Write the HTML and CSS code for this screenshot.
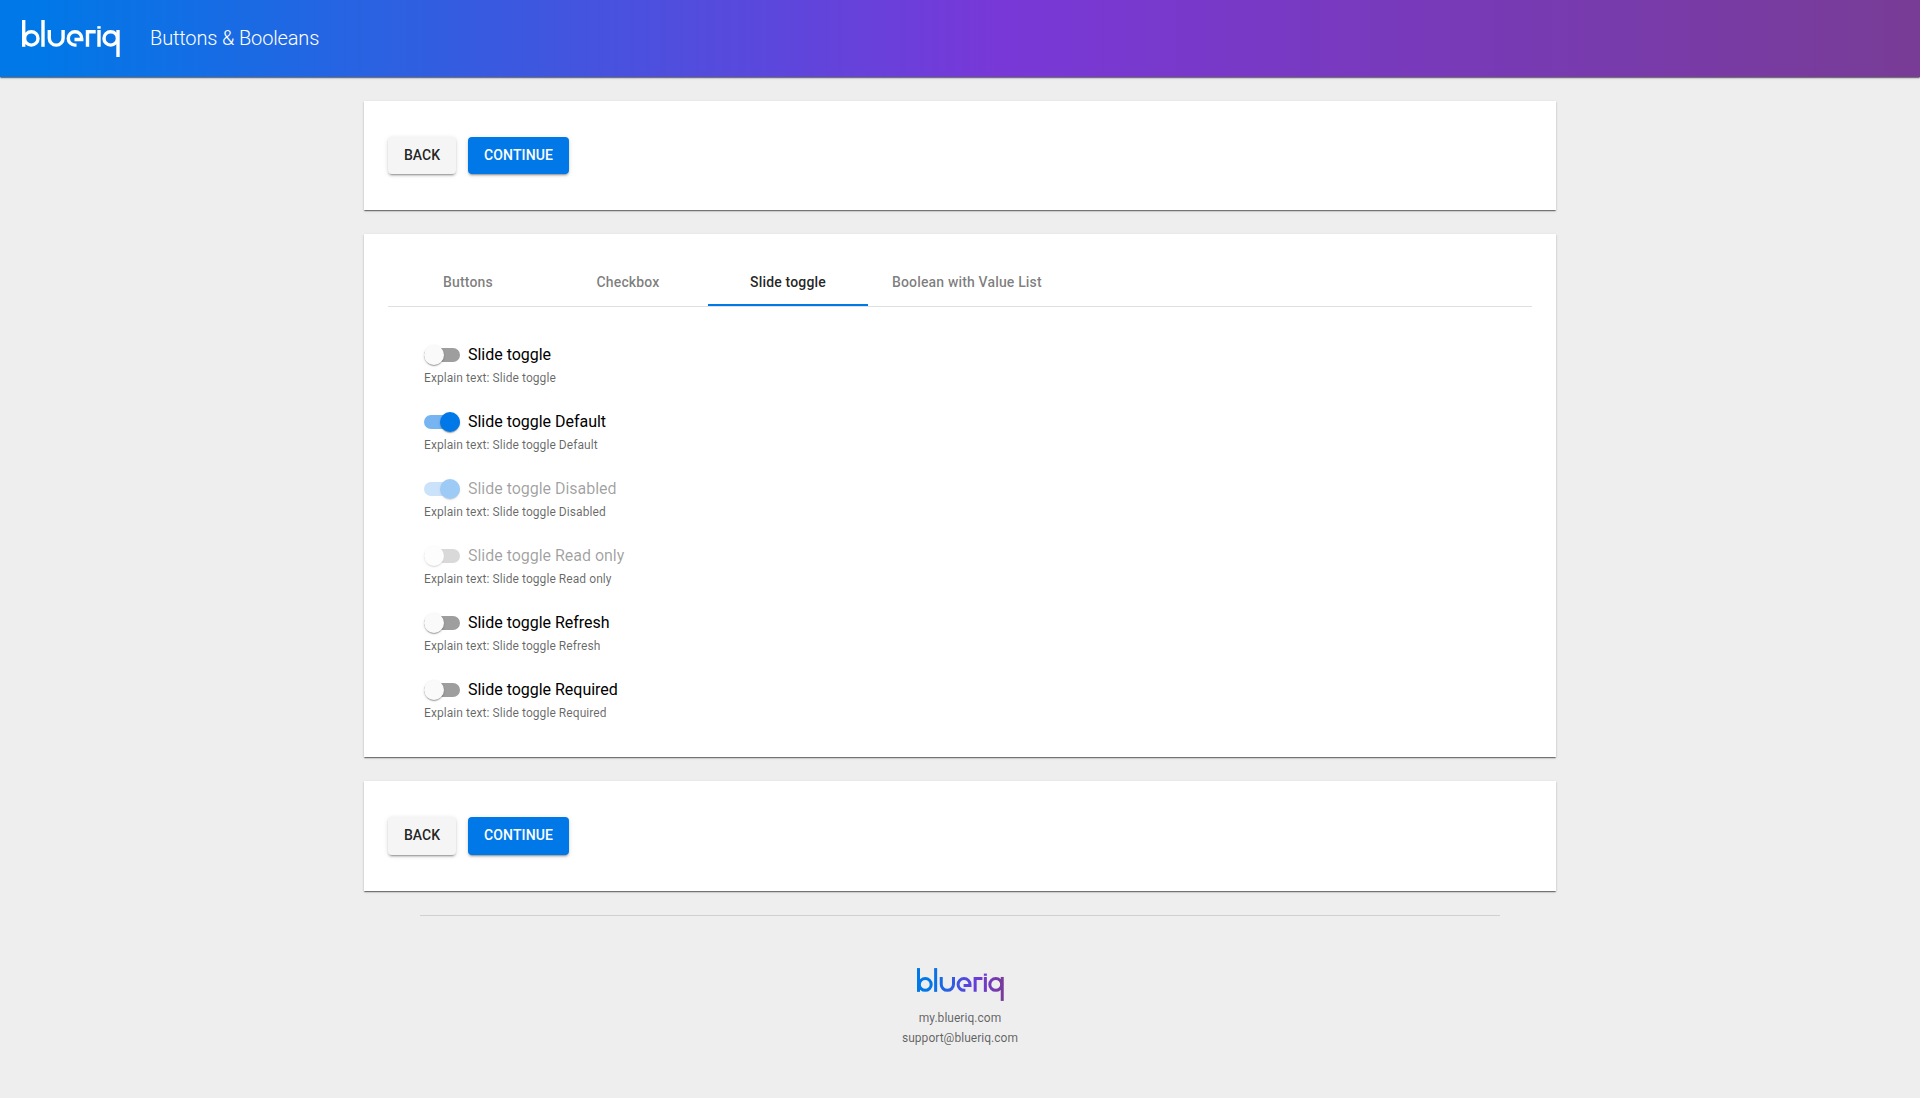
FILE: index.html
```html
<!DOCTYPE html>
<html lang="en">
<head>
<meta charset="utf-8">
<title>Buttons &amp; Booleans</title>
<link rel="stylesheet" href="styles.css">
</head>
<body>
<svg class="defs" width="0" height="0" aria-hidden="true">
  <defs>
    <linearGradient id="brand" gradientUnits="userSpaceOnUse" x1="0" y1="0" x2="98" y2="0">
      <stop offset="0" stop-color="#0078e7"/>
      <stop offset="0.15" stop-color="#0078e7"/>
      <stop offset="0.72" stop-color="#7038d8"/>
      <stop offset="1" stop-color="#783c96"/>
    </linearGradient>
    <symbol id="logo" viewBox="0 0 98 37">
      <g fill="none" stroke-width="3.4">
        <line x1="1.7" y1="0" x2="1.7" y2="26.8"/>
        <circle cx="9.3" cy="18.4" r="6.7"/>
        <line x1="21" y1="0" x2="21" y2="26.8"/>
        <path d="M27.3 10v8.200a6.900 6.900 0 0 0 13.800 0V10"/>
        <path d="M54.500 25.100h-1.500a6.700 6.700 0 1 1 6.700-6.700v1.100h-7.200"/>
        <path d="M65.500 26.800V11.700h8.200"/>
        <line x1="77" y1="10" x2="77" y2="26.800"/>
        <line x1="77" y1="6.200" x2="77" y2="8.700"/>
        <circle cx="88.700" cy="18.400" r="6.700"/>
        <line x1="96" y1="10" x2="96" y2="37"/>
      </g>
    </symbol>
  </defs>
</svg>
<header class="header">
  <svg class="header-logo" role="img" aria-label="blueriq"><use href="#logo"/></svg>
  <h1 class="title">Buttons &amp; Booleans</h1>
</header>
<main class="page">
  <section class="card actions">
    <button class="btn">BACK</button>
    <button class="btn primary">CONTINUE</button>
  </section>
  <section class="card content">
    <nav class="tabs">
      <a class="tab">Buttons</a>
      <a class="tab">Checkbox</a>
      <a class="tab active">Slide toggle</a>
      <a class="tab">Boolean with Value List</a>
    </nav>
    <div class="fields">
      <div class="field">
        <label class="toggle"><span class="track"><span class="thumb"></span></span><span class="text">Slide toggle</span></label>
        <p class="hint">Explain text: Slide toggle</p>
      </div>
      <div class="field">
        <label class="toggle on"><span class="track"><span class="thumb"></span></span><span class="text">Slide toggle Default</span></label>
        <p class="hint">Explain text: Slide toggle Default</p>
      </div>
      <div class="field">
        <label class="toggle on disabled"><span class="track"><span class="thumb"></span></span><span class="text">Slide toggle Disabled</span></label>
        <p class="hint">Explain text: Slide toggle Disabled</p>
      </div>
      <div class="field">
        <label class="toggle disabled"><span class="track"><span class="thumb"></span></span><span class="text">Slide toggle Read only</span></label>
        <p class="hint">Explain text: Slide toggle Read only</p>
      </div>
      <div class="field">
        <label class="toggle"><span class="track"><span class="thumb"></span></span><span class="text">Slide toggle Refresh</span></label>
        <p class="hint">Explain text: Slide toggle Refresh</p>
      </div>
      <div class="field">
        <label class="toggle"><span class="track"><span class="thumb"></span></span><span class="text">Slide toggle Required</span></label>
        <p class="hint">Explain text: Slide toggle Required</p>
      </div>
    </div>
  </section>
  <section class="card actions">
    <button class="btn">BACK</button>
    <button class="btn primary">CONTINUE</button>
  </section>
</main>
<footer class="footer">
  <svg class="footer-logo" role="img" aria-label="blueriq"><use href="#logo"/></svg>
  <a>my.blueriq.com</a>
  <a>support@blueriq.com</a>
</footer>
</body>
</html>
```
FILE: styles.css
```css
* { box-sizing: border-box; }
body {
  margin: 0;
  min-height: 100vh;
  background: #eee;
  font-family: Roboto, "Liberation Sans", sans-serif;
  color: #000;
}
.defs { display: block; }
.header {
  height: 77px;
  padding-left: 22px;
  display: flex;
  align-items: center;
  background: linear-gradient(to right, #0078e7 0%, #0078e7 2%, #7838d8 52%, #783c96 100%);
  box-shadow: 0 2px 1px -1px rgba(0,0,0,.3), 0 1px 1px rgba(0,0,0,.25), 0 1px 3px rgba(0,0,0,.12);
}
.header-logo { width: 98px; height: 37px; stroke: #fff; }
.title {
  margin: 0 0 0 30px;
  padding-bottom: 2px;
  font-size: 20px;
  font-weight: 300;
  line-height: 32px;
  letter-spacing: -.14px;
  color: #fff;
}
.page {
  width: 1192px;
  margin: 24px auto 0;
  display: flex;
  flex-direction: column;
  gap: 24px;
}
.card {
  background: #fff;
  box-shadow: 0 2px 1px -1px rgba(0,0,0,.3), 0 1px 1px rgba(0,0,0,.25), 0 1px 3px rgba(0,0,0,.12);
}
.actions {
  display: flex;
  gap: 12px;
  padding: 36px 24px;
}
.btn {
  height: 37.450px;
  padding: 0 16px 1px;
  border: 0;
  border-radius: 4px;
  font: 500 14px/36px Roboto, "Liberation Sans", sans-serif;
  background: #f5f5f5;
  color: rgba(0,0,0,.87);
  box-shadow: 0 3px 1px -2px rgba(0,0,0,.2), 0 2px 2px rgba(0,0,0,.14), 0 1px 5px rgba(0,0,0,.12);
}
.btn.primary { letter-spacing: .12px; background: #0078e7; color: #fff; }
.content { height: 522.800px; padding: 24px; }
.tabs {
  display: flex;
  height: 49px;
  border-bottom: 1px solid #e0e0e0;
}
.tab {
  min-width: 160px;
  padding: 0 24px;
  text-align: center;
  font-size: 14px;
  font-weight: 500;
  line-height: 48px;
  letter-spacing: .16px;
  color: rgba(0,0,0,.52);
}
.tab.active { color: rgba(0,0,0,.87); box-shadow: inset 0 -2px #0078e7; }
.fields { padding: 36px 36px 0; }
.field { height: 67px; }
.toggle {
  display: flex;
  align-items: center;
  gap: 8px;
  height: 24px;
  font-size: 16px;
}
.text { padding-bottom: 2px; letter-spacing: -.02px; }
.track {
  width: 36px;
  height: 14px;
  border-radius: 7px;
  display: flex;
  align-items: center;
  background: #9e9e9e;
}
.thumb {
  width: 20px;
  height: 20px;
  border-radius: 50%;
  background: #fafafa;
  box-shadow: 0 2px 1px -1px rgba(0,0,0,.2), 0 1px 1px rgba(0,0,0,.14), 0 1px 3px rgba(0,0,0,.12);
}
.on .track { justify-content: flex-end; background: #76b4f2; }
.on .thumb { background: #0078e7; }
.disabled .track { opacity: .38; }
.disabled .text { color: rgba(0,0,0,.38); }
.hint {
  margin: 4px 0 0;
  font-size: 12px;
  line-height: 14px;
  letter-spacing: .07px;
  color: rgba(0,0,0,.6);
}
.footer {
  width: 1080px;
  margin: 24px auto 0;
  padding-top: 52px;
  border-top: 1px solid #d0d0d0;
  display: flex;
  flex-direction: column;
  align-items: center;
  font-size: 12px;
  line-height: 20px;
  letter-spacing: .03px;
  color: rgba(0,0,0,.6);
}
.footer-logo { width: 87px; height: 33px; margin-bottom: 7px; stroke: url(#brand); }
```
